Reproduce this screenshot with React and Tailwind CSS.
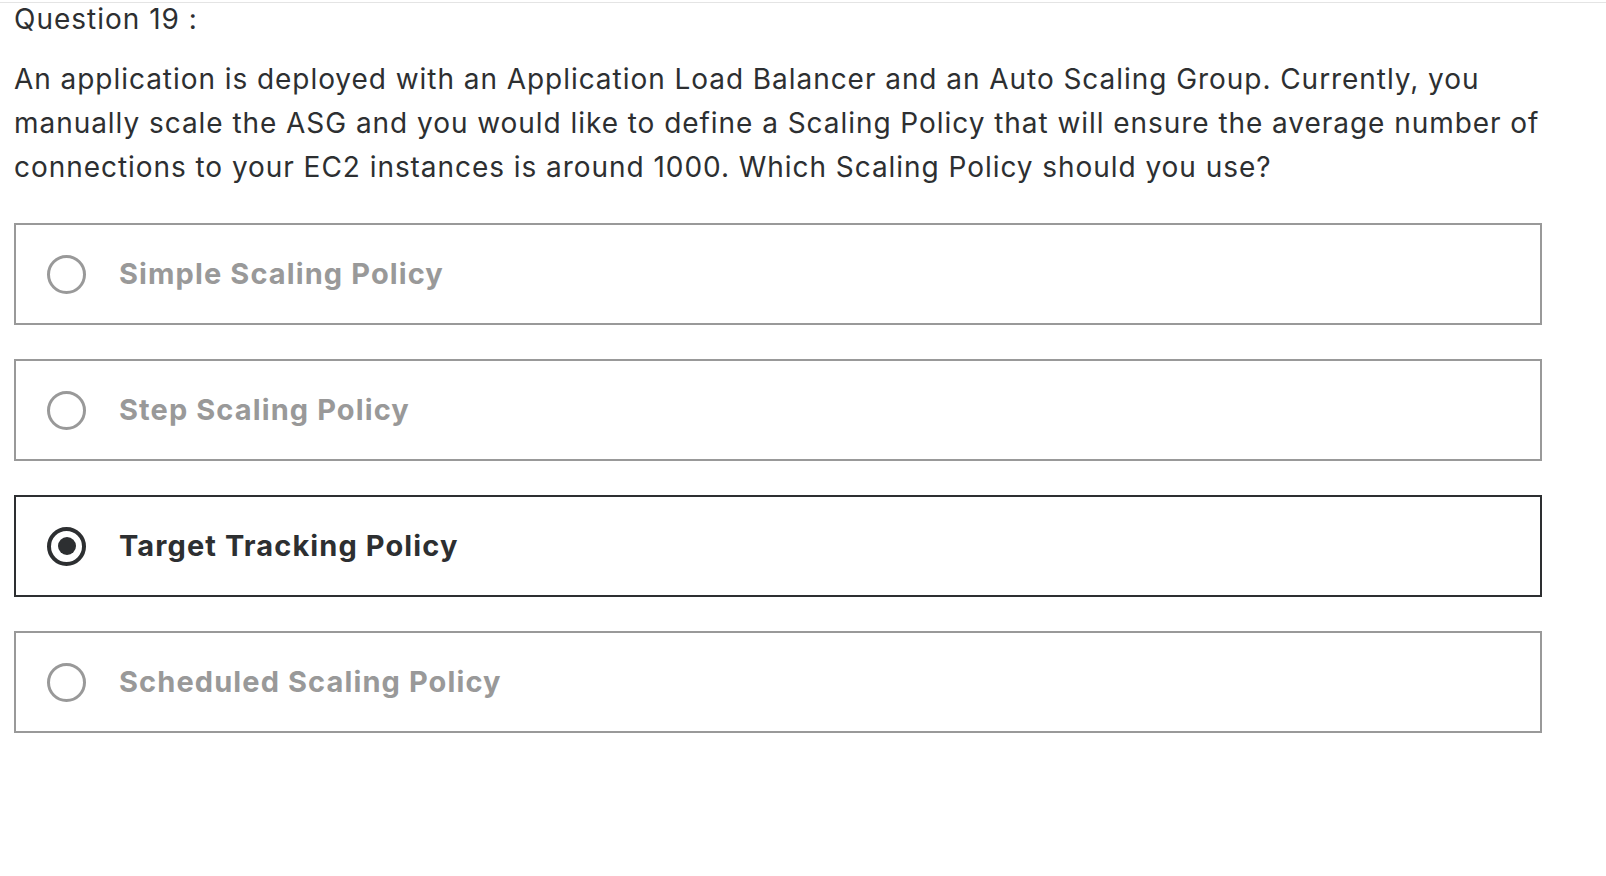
import React from "react";

const options = [
  { label: "Simple Scaling Policy", selected: false },
  { label: "Step Scaling Policy", selected: false },
  { label: "Target Tracking Policy", selected: true },
  { label: "Scheduled Scaling Policy", selected: false },
];

export default function App() {
  return (
    <div className="min-h-screen bg-white pt-[2px] font-['Inter','Liberation_Sans',Arial,sans-serif] text-[#2d2f31]">
      <div className="h-px bg-[#e4e4e4]" />
      <div className="px-[14px]">
        <div className="text-[28px] leading-[32px] tracking-[1px]">Question 19 :</div>
        <p className="mt-[22px] w-[1560px] text-[28px] leading-[44px] tracking-[0.95px]">
          An application is deployed with an Application Load Balancer and an Auto Scaling Group. Currently, you
          manually scale the ASG and you would like to define a Scaling Policy that will ensure the average number of
          connections to your EC2 instances is around 1000. Which Scaling Policy should you use?
        </p>
        <div className="mt-[34px] flex w-[1528px] flex-col gap-[34px]">
          {options.map((o) => (
            <div
              key={o.label}
              className={
                o.selected
                  ? "flex h-[102px] items-center border-2 border-[#2d2f31] pl-[31px]"
                  : "flex h-[102px] items-center border-2 border-[#999999] pl-[31px]"
              }
            >
              {o.selected ? (
                <span className="flex h-[39px] w-[39px] items-center justify-center rounded-full border-[4px] border-[#2d2f31]">
                  <span className="h-[18px] w-[18px] rounded-full bg-[#2d2f31]" />
                </span>
              ) : (
                <span className="h-[39px] w-[39px] rounded-full border-[3px] border-[#999999]" />
              )}
              <span
                className={
                  o.selected
                    ? "ml-[33px] text-[29px] font-bold tracking-[1.1px] text-[#2d2f31]"
                    : "ml-[33px] text-[29px] font-bold tracking-[1.1px] text-[#999999]"
                }
              >
                {o.label}
              </span>
            </div>
          ))}
        </div>
      </div>
    </div>
  );
}
